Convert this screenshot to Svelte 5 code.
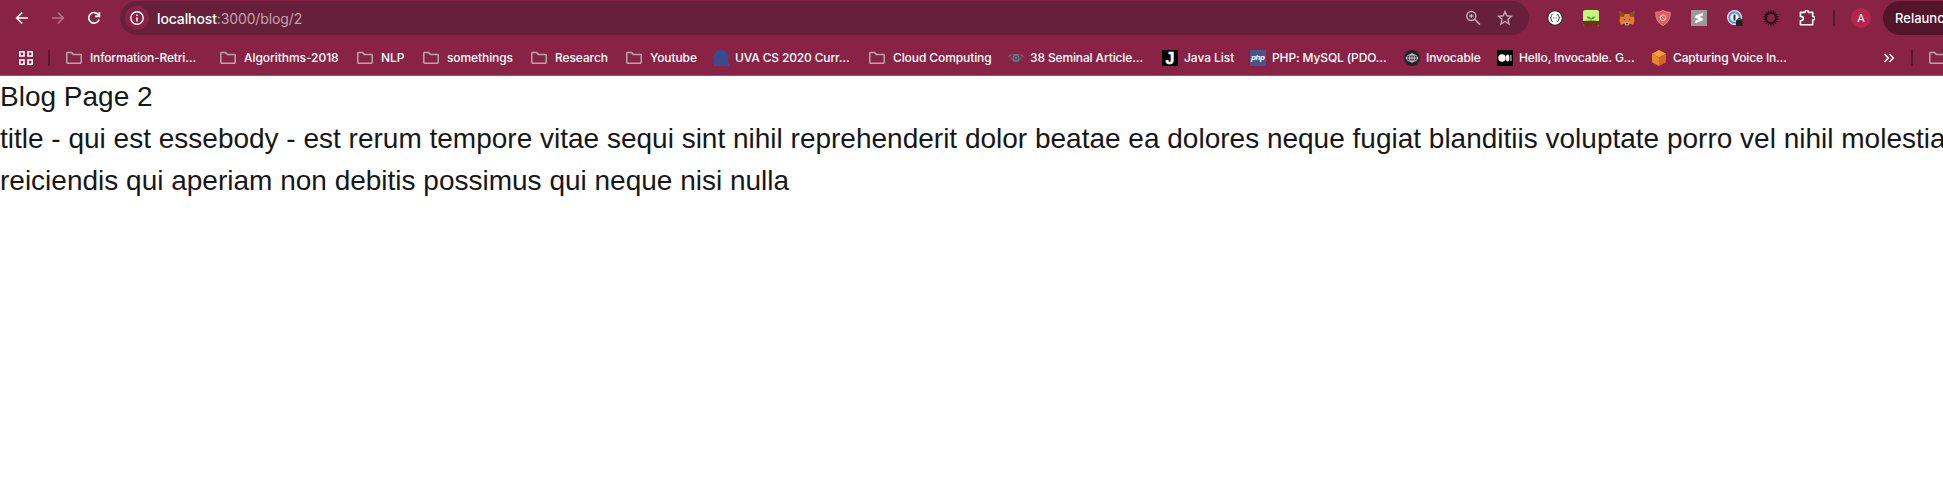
<script>
  const bookmarks = [
    { icon: 'folder', label: 'Information-Retri…', width: 154, spacing: -0.16 },
    { icon: 'folder', label: 'Algorithms-2018', width: 137, spacing: -0.05 },
    { icon: 'folder', label: 'NLP', width: 66, spacing: -0.1 },
    { icon: 'folder', label: 'somethings', width: 108, spacing: -0.1 },
    { icon: 'folder', label: 'Research', width: 95, spacing: -0.1 },
    { icon: 'folder', label: 'Youtube', width: 87, spacing: -0.1 },
    { icon: 'rotunda', label: 'UVA CS 2020 Curr…', width: 156, spacing: -0.15 },
    { icon: 'folder', label: 'Cloud Computing', width: 139, spacing: -0.1 },
    { icon: 'eye', label: '38 Seminal Article…', width: 154, spacing: -0.13 },
    { icon: 'java', label: 'Java List', width: 88, spacing: -0.05 },
    { icon: 'php', label: 'PHP: MySQL (PDO…', width: 154, spacing: -0.12 },
    { icon: 'globe', label: 'Invocable', width: 93, spacing: -0.1 },
    { icon: 'medium', label: 'Hello, Invocable. G…', width: 154, spacing: -0.13 },
    { icon: 'cube', label: 'Capturing Voice In…', width: 150, spacing: -0.15 }
  ];
  const extensions = ['braces', 'plant', 'fox', 'shield', 'stripe', 'password', 'ring', 'puzzle'];
  const rays = Array.from({ length: 18 }, (_, i) => i * 20);
</script>

{#snippet icon(name)}
  <svg class="icon" viewBox="0 0 16 16" fill="none">
    {#if name === 'folder'}
      <path d="M.8 3.2Q.8 2.6 1.4 2.6H5.6L7.4 4.4H14.6Q15.2 4.4 15.2 5V12.6Q15.2 13.3 14.6 13.3H1.4Q.8 13.3.8 12.6Z" stroke="#b3a7a9" stroke-width="1.5" />
    {:else if name === 'rotunda'}
      <path d="M1 5.2Q3 0 8 0T15 5.2H16V7.2H0V5.2Z" fill="#344d93" />
      <path d="M1 7.2H15V14H16V16H0V14H1Z" fill="#344d93" />
      <path d="M3.5 9V14M6.5 9V14M9.5 9V14M12.5 9V14M1 5.5H15" stroke="#643c70" stroke-width=".7" />
    {:else if name === 'eye'}
      <path d="M.3 7Q2 4.3 8 4.3T15.7 7M2.5 7.5Q8 15.5 13.5 7.5" stroke="#6b6570" stroke-width="1.3" />
      <circle cx="8" cy="8" r="2.8" stroke="#4b8385" stroke-width="1.6" />
      <circle cx="8" cy="8" r="1" fill="#589291" />
    {:else if name === 'java'}
      <path d="M0 0H16V16H0Z" fill="#000" />
      <text x="8" y="13.7" text-anchor="middle" font-size="16" font-weight="700" fill="#fff" stroke="#fff" stroke-width=".5">J</text>
    {:else if name === 'php'}
      <rect width="16" height="16" rx="1" fill="#4b5489" />
      <text x="8" y="10.3" text-anchor="middle" font-size="8" font-weight="700" font-style="italic" fill="#fff" textLength="14">php</text>
    {:else if name === 'globe'}
      <circle cx="8" cy="8" r="8" fill="#202328" />
      <ellipse cx="8" cy="8" rx="5.8" ry="3.5" stroke="#c8c8ca" />
      <ellipse cx="8" cy="8" rx="2.7" ry="3.8" stroke="#c8c8ca" />
      <path d="M2 8H14M8 3V13" stroke="#c8c8ca" />
    {:else if name === 'medium'}
      <path d="M0 0H16V16H0Z" fill="#000" />
      <circle cx="5" cy="8" r="3.7" fill="#fff" />
      <ellipse cx="10.6" cy="8" rx="1.8" ry="3.5" fill="#fff" />
      <path d="M13.9 4.9V11.1" stroke="#bbb" stroke-width="1.3" />
    {:else if name === 'cube'}
      <path d="M8 0L15 3.7 8 7.5 1 3.7Z" fill="#f2a03c" />
      <path d="M1 3.7L8 7.5V16L1 12.2Z" fill="#e7892d" />
      <path d="M15 3.7L8 7.5V16L15 12.2Z" fill="#d96422" />
    {:else if name === 'braces'}
      <circle cx="8" cy="8" r="7.3" fill="#fff" stroke="#26282a" stroke-width="1.1" />
      <path d="M5.8 4.3Q4.4 4.3 4.4 5.8T3.2 8Q4.4 8 4.4 9.8T5.8 11.7M10.2 4.3Q11.6 4.3 11.6 5.8T12.8 8Q11.6 8 11.6 9.8T10.2 11.7" stroke="#333" />
      <path d="M6 8H10" stroke="#777" stroke-dasharray="1 .6" />
    {:else if name === 'plant'}
      <rect width="16" height="16" rx="2" fill="#c2f77c" />
      <path d="M0 11Q8 10 16 11V14Q16 16 14 16H2Q0 16 0 14Z" fill="#653714" />
      <path d="M3.7 6.7Q7 6 8 8.7 9.5 5.8 12.6 6.7 11.3 9.4 8.4 9.2V10.6H7.6V9.2Q4.5 9.6 3.7 6.7Z" fill="#43a936" />
    {:else if name === 'fox'}
      <path d="M.4 1L5.8 4H10.2L15.6 1 14.8 6.2 15.5 10.7 14.2 14.7 10.8 13.8 9.2 15.2H6.8L5.2 13.8 1.8 14.7.5 10.7 1.2 6.2Z" fill="#df7d2b" />
      <path d="M.4 1L5.8 4 4.8 7 1.2 6.5ZM15.6 1L10.2 4 11.2 7 14.8 6.5Z" fill="#8a4b22" />
      <path d="M5.2 11.5L7 12.8H9L10.8 11.5 9.4 15.2H6.6Z" fill="#c8b9ab" />
      <path d="M4.2 8.8L6.2 9.4 5.8 10.4ZM11.8 8.8L9.8 9.4 10.2 10.4ZM6.8 13H9.2V14.2H6.8Z" fill="#272d35" />
    {:else if name === 'shield'}
      <path d="M8 .5Q11 2.4 15.2 2.3 15.7 11.6 8 15.6.3 11.6.8 2.3 5 2.4 8 .5Z" fill="#dc5d5c" stroke="#e58b84" stroke-width="1" />
      <circle cx="8" cy="7.8" r="2.8" stroke="#f1c5bd" stroke-width="1.1" />
      <path d="M6 5.8L10 9.8" stroke="#f1c5bd" />
    {:else if name === 'stripe'}
      <rect width="16" height="16" rx=".6" fill="#999a99" />
      <path d="M11.8 2.8V5.6L8.2 7 11.8 8.2V10.2L4.3 13.2V10.6L7.8 9.2 4.3 8V5.8Z" fill="#fff" />
    {:else if name === 'password'}
      <circle cx="7.5" cy="7.5" r="7.4" fill="#f6f7fb" />
      <circle cx="7.5" cy="7.5" r="5.3" stroke="#568add" stroke-width="2" />
      <path d="M7.5 4.5V10.5" stroke="#26364d" stroke-width="2" />
      <path d="M10.7 10.5V9.7Q12.4 7 14.1 9.7V10.5" stroke="#222" stroke-width="1.2" />
      <rect x="9" y="10" width="6.7" height="6" rx="1" fill="#222" />
    {:else if name === 'ring'}
      <circle cx="8" cy="8" r="4.9" stroke="#2b0f1a" stroke-width="2" />
      {#each rays as angle}
        <path d="M8 .3V3" stroke="#2b0f1a" stroke-width="1.2" transform="rotate({angle} 8 8)" />
      {/each}
    {:else if name === 'puzzle'}
      <path d="M1.4 2.4H6Q6.1.4 7.7.4T9.4 2.4H13.7V6.5Q15.9 6.7 15.9 8.3T13.7 10.1V14.8H1.4V10.9Q4.4 10.6 4.4 8.6T1.4 6.4Z" stroke="#fff" stroke-width="1.6" stroke-linejoin="round" />
    {/if}
  </svg>
{/snippet}

<div class="window">
  <header>
    <div class="toolbar">
      <nav>
        <svg class="icon" viewBox="0 0 16 16" fill="none" stroke="#fff" stroke-width="1.6"><path d="M14 8H3M8.2 2.5L2.7 8 8.2 13.5" /></svg>
        <svg class="icon" viewBox="0 0 16 16" fill="none" stroke="#b27589" stroke-width="1.6"><path d="M2 8H13M7.8 2.5L13.3 8 7.8 13.5" /></svg>
        <svg class="icon" viewBox="0 0 16 16" fill="none" stroke="#fff" stroke-width="1.7"><path d="M13.1 9.4A5.3 5.3 0 1 1 12.4 4.8L13.6 6.1M13.4 2V6.4H9" /></svg>
      </nav>
      <div class="address">
        <span class="info">
          <svg class="icon" viewBox="0 0 16 16" fill="none" stroke="#fff"><circle cx="8" cy="8" r="6.2" stroke-width="1.4" /><path d="M8 7.2V11.5M8 4.5V6" stroke-width="1.5" /></svg>
        </span>
        <span class="url"><b>localhost</b>:3000/blog/2</span>
        <svg class="icon magnifier" viewBox="0 0 16 16" fill="none" stroke="#c3a9b4" stroke-width="1.5"><circle cx="6.3" cy="6" r="4.5" /><path d="M9.7 9.3L15 14.6M6.3 3.9V8.1M4.2 6H8.4" /></svg>
        <svg class="icon" viewBox="0 0 16 16" fill="none" stroke="#c3a9b4" stroke-width="1.4"><path d="M8 1.5L9.8 5.8 14.5 6.2 11 9.3 12 14 8 11.5 4 14 5 9.3 1.5 6.2 6.2 5.8Z" /></svg>
      </div>
      <div class="extensions">
        {#each extensions as name}{@render icon(name)}{/each}
      </div>
      <i class="divider after-extensions"></i>
      <span class="avatar">A</span>
      <span class="relaunch">Relaunch to update</span>
    </div>
    <div class="bookmarks">
      <svg class="icon apps" viewBox="0 0 16 16" fill="none" stroke="#fff" stroke-width="1.6"><path d="M1.8 1.8H6V6H1.8ZM10 1.8H14.2V6H10ZM1.8 10H6V14.2H1.8ZM10 10H14.2V14.2H10Z" /></svg>
      <i class="divider"></i>
      <div class="links">
        {#each bookmarks as item}
          <span class="bookmark" class:folder={item.icon === 'folder'} style="width:{item.width}px;letter-spacing:{item.spacing}px">{@render icon(item.icon)}{item.label}</span>
        {/each}
      </div>
      <svg class="more" viewBox="0 0 12 10" fill="none" stroke="#fff" stroke-width="1.5"><path d="M1.5 1L5.3 5 1.5 9M6.5 1L10.3 5 6.5 9" /></svg>
      <i class="divider after-more"></i>
      {@render icon('folder')}
    </div>
  </header>
  <main>
    <div>Blog Page 2</div>
    <div>title - qui est essebody - est rerum tempore vitae sequi sint nihil reprehenderit dolor beatae ea dolores neque fugiat blanditiis voluptate porro vel nihil molestiae ut<br />reiciendis qui aperiam non debitis possimus qui neque nisi nulla</div>
  </main>
</div>

<style>
  :global(body) { margin: 0; background: #fff; }
  .window { height: 504px; overflow: hidden; font-family: Inter, sans-serif; }
  header { box-sizing: border-box; height: 76px; background: #892345; border-bottom: 1px solid #a64b69; color: #fff; overflow: hidden; }
  .icon { display: block; width: 16px; height: 16px; flex: none; }
  .icon text { font-family: "Liberation Sans", sans-serif; letter-spacing: 0; }
  .toolbar { display: flex; align-items: center; height: 34px; padding-top: 1px; white-space: nowrap; }
  nav { display: flex; gap: 20px; padding: 0 18px 0 14px; }
  .address { box-sizing: border-box; display: flex; align-items: center; width: 1409px; height: 34px; border-radius: 17px; padding: 0 16px 0 5px; background: #66203a; flex: none; }
  .info { display: flex; align-items: center; justify-content: center; width: 24px; height: 24px; border-radius: 50%; background: #892345; }
  .url { margin-left: 8px; font-size: 14px; letter-spacing: -0.12px; color: #c3a0ae; }
  .url b { font-weight: 500; color: #fff; }
  .magnifier { margin: 0 16px 0 auto; }
  .extensions { display: flex; gap: 20px; margin-left: 18px; }
  .divider { display: block; width: 2px; height: 16px; background: #5a1830; flex: none; }
  .after-extensions { margin-left: 18px; }
  .avatar { width: 20px; height: 20px; margin-left: 16px; border-radius: 50%; background: #b02750; font-size: 11px; line-height: 20px; text-align: center; flex: none; }
  .relaunch { height: 34px; margin-left: 12px; padding: 0 12px; border-radius: 17px; background: #521529; font-size: 13px; font-weight: 500; line-height: 34px; flex: none; }
  .bookmarks { display: flex; align-items: center; height: 46px; white-space: nowrap; }
  .apps { margin: 0 14px 0 18px; }
  .links { display: flex; width: 1817px; margin-left: 16px; flex: none; }
  .bookmark { display: flex; align-items: center; gap: 6px; flex: none; font-size: 12px; font-weight: 500; line-height: 18px; }
  .folder { gap: 8px; }
  .more { width: 12px; height: 10px; flex: none; }
  .after-more { margin: 0 16px; }
  main { font: 28px/42px "Liberation Sans", Arial, sans-serif; color: #171717; white-space: nowrap; }
</style>
